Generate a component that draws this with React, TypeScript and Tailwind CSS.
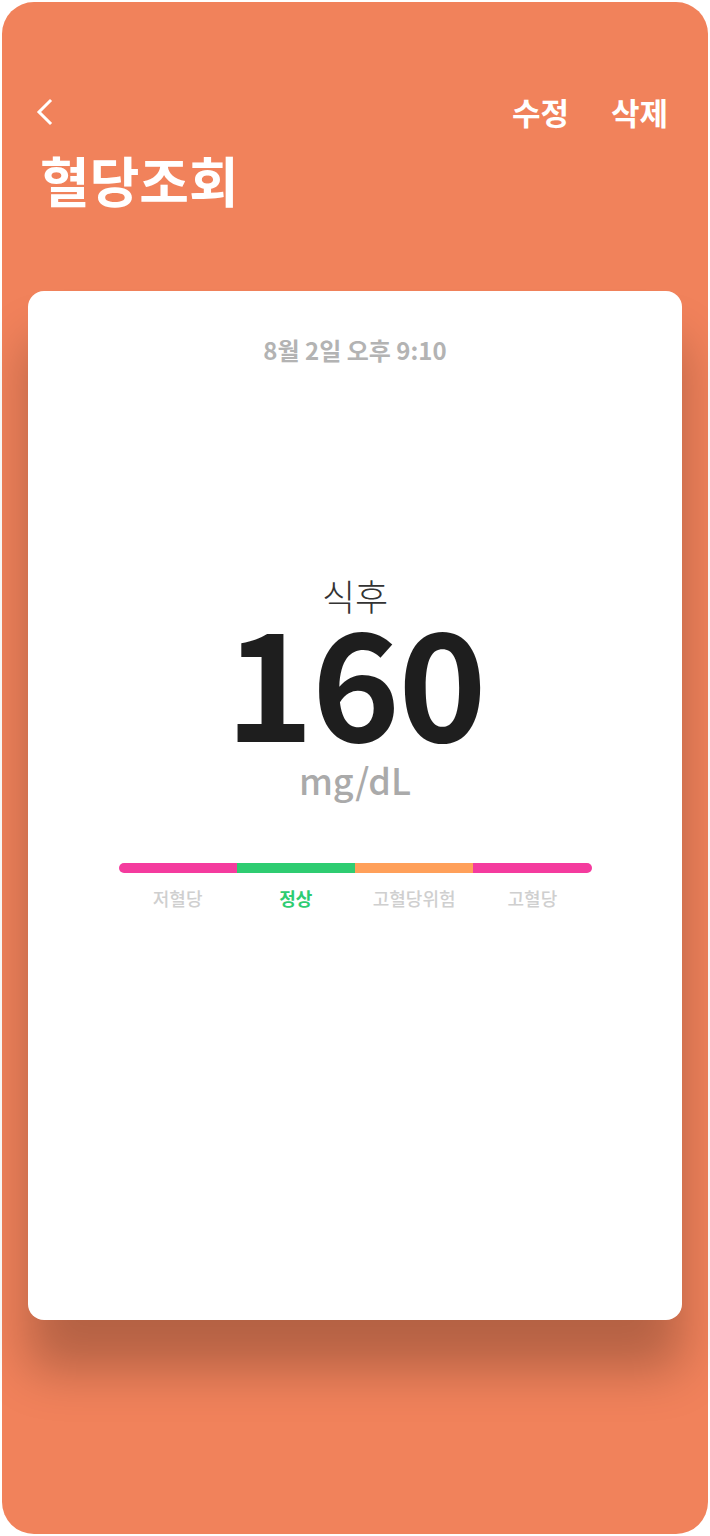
import React from 'react';

const FONT = { fontFamily: '"Noto Sans CJK KR", "Noto Sans", sans-serif' };

const LEVELS = [
  { label: '저혈당', bar: 'bg-[#F43B9E]', text: 'text-[#CFCFCF] font-medium' },
  { label: '정상', bar: 'bg-[#2ECC71]', text: 'text-[#2ECC71] font-bold' },
  { label: '고혈당위험', bar: 'bg-[#FFA05A]', text: 'text-[#CFCFCF] font-medium' },
  { label: '고혈당', bar: 'bg-[#F43B9E]', text: 'text-[#CFCFCF] font-medium' },
];

export default function App() {
  return (
    <div className="w-[710px] h-[1536px] bg-white p-[2px]" style={FONT}>
      <div className="h-full bg-[#F1825B] rounded-[32px] flex flex-col">
        {/* header */}
        <div className="flex items-center justify-between pt-[92px] pl-[33px] pr-[40px]">
          <button className="w-[24px] h-[32px] flex items-center">
            <svg width="20" height="28" viewBox="0 0 20 28" fill="none">
              <path d="M15 3 L4 14 L15 25" stroke="white" strokeWidth="3" strokeLinecap="square" />
            </svg>
          </button>
          <div className="flex gap-[42px] text-white text-[31px] font-bold leading-[36px]">
            <span>수정</span>
            <span>삭제</span>
          </div>
        </div>
        <h1 className="mt-[18px] ml-[38px] text-white text-[54px] font-bold leading-[64px]">혈당조회</h1>

        {/* card */}
        <div className="mt-[79px] mx-[26px] h-[1029px] bg-white rounded-[16px] shadow-[0_50px_50px_rgba(0,0,0,0.25)] flex flex-col items-center">
          <p className="mt-[43px] text-[24px] leading-[32px] font-semibold text-[#B3B3B3]">8월 2일 오후 9:10</p>
          <p className="mt-[209px] text-[36px] leading-[40px] font-light text-[#333]">식후</p>
          <p className="mt-[2px] text-[150px] leading-[120px] font-bold text-[#1E1E1E] tracking-[-2px]">160</p>
          <p className="mt-[20px] text-[36px] leading-[44px] font-medium text-[#AAAAAA]">mg/dL</p>

          <div className="mt-[62px] w-[473px]">
            <div className="grid grid-cols-4 h-[10px] rounded-full overflow-hidden">
              {LEVELS.map(l => (
                <div key={l.label} className={l.bar} />
              ))}
            </div>
            <div className="grid grid-cols-4 mt-[13px]">
              {LEVELS.map(l => (
                <span key={l.label} className={`text-center text-[18px] leading-[24px] ${l.text}`}>{l.label}</span>
              ))}
            </div>
          </div>
        </div>
      </div>
    </div>
  );
}
